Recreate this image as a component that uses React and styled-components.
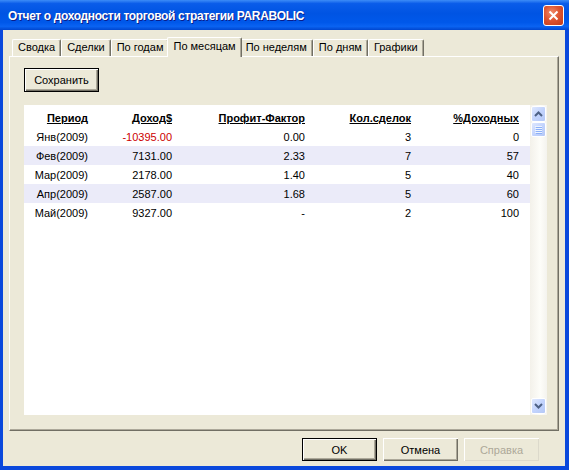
import React from "react";
import styled, { createGlobalStyle } from "styled-components";

const GlobalStyle = createGlobalStyle`
  html, body {
    margin: 0;
    padding: 0;
    background: #ffffff;
  }
  body {
    font-family: "Liberation Sans", Arial, sans-serif;
    font-size: 11px;
    color: #000;
  }
`;

const Window = styled.div`
  width: 569px;
  height: 470px;
  display: flex;
  flex-direction: column;
  background: #0a48dc;
  overflow: hidden;
`;

const TitleBar = styled.div`
  height: 30px;
  flex: none;
  display: flex;
  align-items: center;
  justify-content: space-between;
  padding: 0 5px 0 8px;
  background: linear-gradient(
    180deg,
    #3d8cf7 0%,
    #0a5ce9 12%,
    #0054e3 45%,
    #0058ea 75%,
    #0a63f2 88%,
    #0046cf 100%
  );
`;

const Title = styled.span`
  font-family: "Liberation Sans", Arial, sans-serif;
  font-weight: bold;
  font-size: 12px;
  letter-spacing: -0.35px;
  color: #fff;
  text-shadow: 1px 1px 0 #0a1d8a;
  padding-top: 1px;
`;

const CloseButton = styled.div`
  width: 19px;
  height: 19px;
  border: 1px solid #fff;
  border-radius: 3px;
  background: radial-gradient(circle at 40% 35%, #f08b6b 0%, #de5532 45%, #c23a17 100%);
  display: flex;
  align-items: center;
  justify-content: center;
  margin-top: 1px;
`;

const Client = styled.div`
  flex: 1;
  margin: 0 4px 4px 3px;
  background: #ece9d8;
  padding: 7px 6px 0;
  display: flex;
  flex-direction: column;
`;

const TabRow = styled.div`
  height: 19px;
  display: flex;
  align-items: flex-end;
  padding-left: 3px;
  position: relative;
  z-index: 1;
`;

const Tab = styled.div`
  box-sizing: border-box;
  height: ${(p) => (p.$active ? "20px" : "17px")};
  margin: ${(p) => (p.$active ? "0 -2px -1px -2px" : "0")};
  padding: 0 ${(p) => (p.$active ? "5px" : "5px")};
  line-height: ${(p) => (p.$active ? "16px" : "15px")};
  background: #ece9d8;
  border-top: 1px solid #fff;
  border-left: 1px solid #fff;
  border-right: 1px solid #716f64;
  border-radius: 2px 2px 0 0;
  box-shadow: inset -1px 0 0 #aca899;
  white-space: nowrap;
  position: relative;
  z-index: ${(p) => (p.$active ? 2 : 1)};
`;

const Panel = styled.div`
  height: 375px;
  box-sizing: border-box;
  border-top: 1px solid #fff;
  border-left: 1px solid #fff;
  border-right: 1px solid #716f64;
  border-bottom: 1px solid #716f64;
  box-shadow: inset -1px -1px 0 #aca899;
  padding: 11px 11px 0 14px;
  display: flex;
  flex-direction: column;
  align-items: flex-start;
`;

const Button = styled.div`
  box-sizing: border-box;
  width: 75px;
  height: ${(p) => (p.$tall ? "24px" : "23px")};
  display: flex;
  align-items: center;
  justify-content: center;
  background: #ece9d8;
  color: ${(p) => (p.$disabled ? "#aca899" : "#000")};
  border: ${(p) => (p.$default ? "1px solid #000" : "none")};
  padding: ${(p) => (p.$default ? "0" : "1px")};
  box-shadow: ${(p) =>
    p.$disabled
      ? "inset 1px 1px 0 #fff, inset -1px -1px 0 #dcd9cb"
      : "inset 1px 1px 0 #fff, inset -1px -1px 0 #716f64, inset -2px -2px 0 #aca899"};
`;

const List = styled.div`
  margin-top: 13px;
  width: 523px;
  height: 310px;
  background: #fff;
  display: flex;
`;

const Grid = styled.div`
  flex: 1;
  padding-top: 3px;
  display: flex;
  flex-direction: column;
`;

const Row = styled.div`
  height: 19px;
  display: grid;
  grid-template-columns: 64px 84px 133px 106px 108px;
  align-items: center;
  background: ${(p) => (p.$shaded ? "#ebebf9" : "transparent")};
`;

const HeadCell = styled.span`
  text-align: right;
  font-weight: bold;
  text-decoration: underline;
`;

const Cell = styled.span`
  text-align: right;
  color: ${(p) => (p.$red ? "#cc0000" : "#000")};
`;

const ScrollBar = styled.div`
  width: 17px;
  display: flex;
  flex-direction: column;
  align-items: center;
  background: linear-gradient(90deg, #f3f1ea 0%, #fdfdf9 60%, #f4f3ee 100%);
`;

const ScrollButton = styled.div`
  box-sizing: border-box;
  width: 15px;
  height: ${(p) => p.$h || 16}px;
  margin: ${(p) => p.$m || "1px 0 0"};
  border: 1px solid #fff;
  border-radius: 2px;
  background: linear-gradient(135deg, #dfe8fe 0%, #c3d4fd 50%, #b4c8f6 100%);
  display: flex;
  align-items: center;
  justify-content: center;
`;

const Track = styled.div`
  flex: 1;
`;

const Footer = styled.div`
  display: flex;
  justify-content: flex-end;
  gap: 6px;
  padding: 7px 20px 0 0;
`;

const rows = [
  ["Янв(2009)", "-10395.00", "0.00", "3", "0", true],
  ["Фев(2009)", "7131.00", "2.33", "7", "57", false],
  ["Мар(2009)", "2178.00", "1.40", "5", "40", false],
  ["Апр(2009)", "2587.00", "1.68", "5", "60", false],
  ["Май(2009)", "9327.00", "-", "2", "100", false],
];

const tabs = ["Сводка", "Сделки", "По годам", "По месяцам", "По неделям", "По дням", "Графики"];

const Chevron = ({ down }) => (
  <svg width="9" height="6" viewBox="0 0 9 6">
    <path
      d={down ? "M1 1 L4.5 4.5 L8 1" : "M1 5 L4.5 1.5 L8 5"}
      fill="none"
      stroke="#4d6185"
      strokeWidth="2"
    />
  </svg>
);

const Grip = () => (
  <svg width="7" height="8" viewBox="0 0 7 8">
    {[0, 2, 4, 6].map((y) => (
      <g key={y}>
        <rect x="0" y={y} width="7" height="1" fill="#eef4fe" />
        <rect x="1" y={y + 1} width="6" height="1" fill="#8cb0f8" />
      </g>
    ))}
  </svg>
);

export default function App() {
  return (
    <>
      <GlobalStyle />
      <Window>
        <TitleBar>
          <Title>Отчет о доходности торговой стратегии PARABOLIC</Title>
          <CloseButton>
            <svg width="11" height="11" viewBox="0 0 11 11">
              <path d="M1.5 1.5 L9.5 9.5 M9.5 1.5 L1.5 9.5" stroke="#fff" strokeWidth="2" />
            </svg>
          </CloseButton>
        </TitleBar>
        <Client>
          <TabRow>
            {tabs.map((t) => (
              <Tab key={t} $active={t === "По месяцам"}>
                {t}
              </Tab>
            ))}
          </TabRow>
          <Panel>
            <Button $default $tall>
              Сохранить
            </Button>
            <List>
              <Grid>
                <Row>
                  <HeadCell>Период</HeadCell>
                  <HeadCell>Доход$</HeadCell>
                  <HeadCell>Профит-Фактор</HeadCell>
                  <HeadCell>Кол.сделок</HeadCell>
                  <HeadCell>%Доходных</HeadCell>
                </Row>
                {rows.map((r, i) => (
                  <Row key={r[0]} $shaded={i % 2 === 1}>
                    <Cell>{r[0]}</Cell>
                    <Cell $red={r[5]}>{r[1]}</Cell>
                    <Cell>{r[2]}</Cell>
                    <Cell>{r[3]}</Cell>
                    <Cell>{r[4]}</Cell>
                  </Row>
                ))}
              </Grid>
              <ScrollBar>
                <ScrollButton>
                  <Chevron />
                </ScrollButton>
                <ScrollButton $h={15} $m="0">
                  <Grip />
                </ScrollButton>
                <Track />
                <ScrollButton $m="0 0 1px">
                  <Chevron down />
                </ScrollButton>
              </ScrollBar>
            </List>
          </Panel>
          <Footer>
            <Button $default>OK</Button>
            <Button>Отмена</Button>
            <Button $disabled>Справка</Button>
          </Footer>
        </Client>
      </Window>
    </>
  );
}
